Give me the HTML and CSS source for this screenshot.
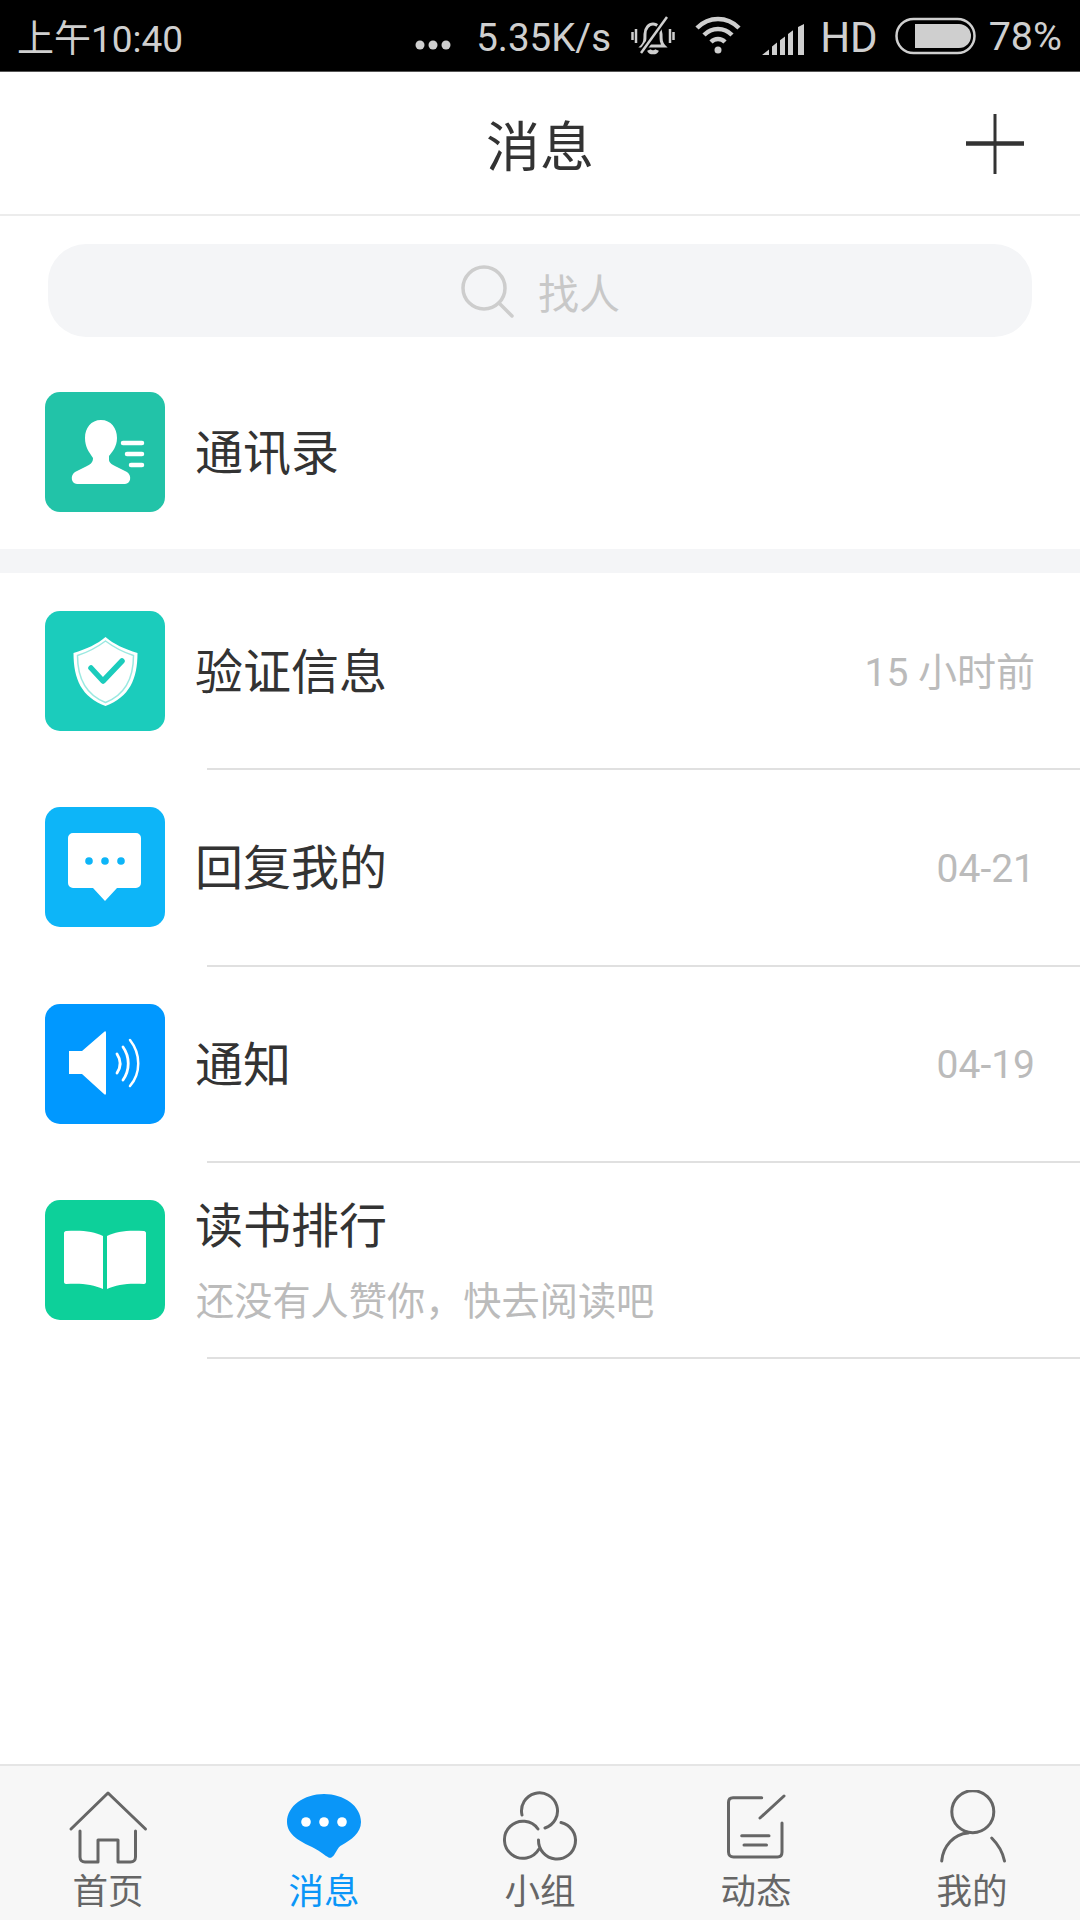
FILE: index.html
```html
<!DOCTYPE html>
<html lang="zh-CN">
<head>
  <meta charset="UTF-8" />
  <meta name="viewport" content="width=device-width, initial-scale=1.0" />
  <title>消息</title>
  <link rel="stylesheet" href="styles.css">
</head>
<body>
  <div class="status-bar">
    <span class="clock">上午10:40</span>
    <div class="status-right">
      <svg class="st-dots" width="36" height="12" viewBox="0 0 36 12"><circle cx="5" cy="6" r="4.5"/><circle cx="18" cy="6" r="4.5"/><circle cx="31" cy="6" r="4.5"/></svg>
      <span class="speed">5.35K/s</span>
      <svg class="st-bell" width="44" height="44" viewBox="0 0 44 44" fill="none" stroke="#cfcfcf" stroke-width="3">
        <path d="M11 32c3-3 3-6 3-12 0-6 4-10 8-10s8 4 8 10c0 6 0 9 3 12z"/>
        <path d="M18 36c1 3 7 3 8 0" stroke-width="4"/>
        <path d="M5 15v14M1.500 18v8M39 15v14M42.500 18v8" stroke-width="2.500"/>
        <path d="M10 39L36 3" stroke="#000" stroke-width="6"/>
        <path d="M10 39L36 3" stroke-width="2.500"/>
      </svg>
      <svg class="st-wifi" width="46" height="42" viewBox="0 0 46 42" fill="none" stroke="#cfcfcf" stroke-width="4.500">
        <path d="M2 15C14 3 32 3 44 15"/>
        <path d="M9 22c8-8 20-8 28 0"/>
        <path d="M16 29c4-4 10-4 14 0"/>
        <circle cx="23" cy="37" r="3.500" fill="#cfcfcf" stroke="none"/>
      </svg>
      <svg class="st-signal" width="45" height="31" viewBox="0 0 45 40" preserveAspectRatio="none" fill="#cfcfcf">
        <path d="M0 40l7-7v7zM10 40V29l5-5v16zM18 40V21l5-5v24zM26 40V13l5-5v32zM36 40V4l6-4v40z"/>
      </svg>
      <span class="hd">HD</span>
      <svg class="st-battery" width="81" height="38" viewBox="0 0 81 38" fill="none">
        <rect x="1.500" y="2" width="78" height="34" rx="17" stroke="#cfcfcf" stroke-width="2.500"/>
        <path d="M20 7h44a12 12 0 0 1 0 24H20z" fill="#cfcfcf"/>
      </svg>
      <span class="pct">78%</span>
    </div>
  </div>

  <div class="top-bar">
    <h1 class="title">消息</h1>
    <svg class="add-btn" width="58" height="60" viewBox="0 0 58 60"><path d="M0 29.500h58" stroke="#333" stroke-width="4.500"/><path d="M29 0v60" stroke="#333" stroke-width="3"/></svg>
  </div>

  <div class="content">
    <div class="search-wrap">
      <div class="search-box">
        <svg width="54" height="54" viewBox="0 0 54 54" fill="none" stroke="#cdcdcd" stroke-width="3.500"><circle cx="24" cy="24" r="21"/><path d="M39 39l13 13" stroke-linecap="round"/></svg>
        <span>找人</span>
      </div>
    </div>

    <div class="row row-contacts">
      <svg class="icon" viewBox="0 0 120 120">
        <rect width="120" height="120" rx="15" fill="#22c3a8"/>
        <path fill="#fff" d="M56 28c10 0 16 8 16 18 0 9-5 14-8 18v4c0 3 4 5 8 7l10 5c5 3 4 12-2 12H32c-6 0-7-9-2-12l12-6c4-2 6-4 6-8-4-6-8-11-8-20 0-10 6-18 16-18z"/>
        <path stroke="#fff" stroke-width="4.500" stroke-linecap="round" d="M78 51h19M82 62h15M86 73h11"/>
      </svg>
      <span class="name">通讯录</span>
    </div>

    <div class="band"></div>

    <div class="row">
      <svg class="icon" viewBox="0 0 120 120">
        <rect width="120" height="120" rx="15" fill="#1bccbc"/>
        <path fill="#fff" d="M60.500 26c8 7 19 12 32 16 0 26-8 44-32 53-24-9-32-27-32-53 13-4 24-9 32-16z"/>
        <path fill="none" stroke="#9be9e1" stroke-width="1.500" d="M60.500 30c8 6 17 11 28 14.500 0 23-8 39-28 47-20-8-28-24-28-47C43.500 41 52.500 36 60.500 30z"/>
        <path fill="none" stroke="#1bccbc" stroke-width="5.500" stroke-linecap="round" stroke-linejoin="round" d="M46 57l12 13 19-20"/>
      </svg>
      <span class="name">验证信息</span>
      <span class="time">15 小时前</span>
    </div>
    <div class="divider"></div>

    <div class="row">
      <svg class="icon" viewBox="0 0 120 120">
        <rect width="120" height="120" rx="15" fill="#0db5f8"/>
        <path fill="#fff" d="M28 26h63a5 5 0 0 1 5 5v45a5 5 0 0 1-5 5H72L60 94 48 81H28a5 5 0 0 1-5-5V31a5 5 0 0 1 5-5z"/>
        <circle cx="44" cy="54" r="3.800" fill="#0db5f8"/><circle cx="60" cy="54" r="3.800" fill="#0db5f8"/><circle cx="76" cy="54" r="3.800" fill="#0db5f8"/>
      </svg>
      <span class="name">回复我的</span>
      <span class="time">04-21</span>
    </div>
    <div class="divider"></div>

    <div class="row">
      <svg class="icon" viewBox="0 0 120 120">
        <rect width="120" height="120" rx="15" fill="#0098ff"/>
        <path fill="#fff" d="M24 47h13l22-19c1-1 2-1 2 1v60c0 2-1 2-2 1L37 70H24z"/>
        <path fill="none" stroke="#fff" stroke-width="2.800" stroke-linecap="round" d="M72 50c4 6 4 13 0 19M78 43c7 10 7 23 0 33"/>
        <path fill="none" stroke="#fff" stroke-width="2.500" stroke-linecap="round" d="M85 36c11 14 11 33 0 46"/>
      </svg>
      <span class="name">通知</span>
      <span class="time">04-19</span>
    </div>
    <div class="divider"></div>

    <div class="row">
      <svg class="icon" viewBox="0 0 120 120">
        <rect width="120" height="120" rx="15" fill="#0dd09a"/>
        <path fill="#fff" d="M21 31c15-1 28 0 37 5v53c-10-5-23-6-37-5-1 0-2-1-2-2V33c0-1 1-2 2-2zM99 31c-15-1-28 0-37 5v53c10-5 23-6 37-5 1 0 2-1 2-2V33c0-1-1-2-2-2z"/>
      </svg>
      <div class="text-col">
        <span class="name">读书排行</span>
        <span class="sub">还没有人赞你，快去阅读吧</span>
      </div>
    </div>
    <div class="divider"></div>
  </div>

  <div class="tab-bar">
    <div class="tab">
      <svg viewBox="0 0 100 80" width="100" height="80" class="tab-icon">
        <path d="M13 39L50 3l37.500 36M22 41v26c0 3 2 5 5 5h13V50h20v22h12.500c3 0 5-2 5-5V41"/>
      </svg>
      <span>首页</span>
    </div>
    <div class="tab active">
      <svg viewBox="0 0 100 80" width="100" height="80">
        <path fill="#0a96f8" d="M50 4c20 0 37 12 37 28 0 11-10 18-19 23-5 2-7 11-10 12-2 2-4 0-6-1-5-4-10-7-14-9-11-5-25-12-25-25C13 16 30 4 50 4z"/>
        <circle cx="32" cy="32" r="4.800" fill="#fff"/><circle cx="50" cy="32" r="4.800" fill="#fff"/><circle cx="68" cy="32" r="4.800" fill="#fff"/>
      </svg>
      <span>消息</span>
    </div>
    <div class="tab">
      <svg viewBox="0 0 100 80" width="100" height="80" class="tab-icon">
        <path d="M32 25A18 18 0 1 1 55 38"/>
        <path d="M48 39A18.500 18.500 0 1 0 49 59"/>
        <path d="M71 32.500A18.500 18.500 0 1 1 48.500 50"/>
      </svg>
      <span>小组</span>
    </div>
    <div class="tab">
      <svg viewBox="0 0 100 80" width="100" height="80" class="tab-icon">
        <path d="M55.700 7.700H27c-3 0-4.500 2-4.500 4.500V62c0 3 2 5 5 5h44c3 0 4.500-2 4.500-5V33"/>
        <path d="M54 28L78 6M35.700 45.700H63M38 55h22.500"/>
      </svg>
      <span>动态</span>
    </div>
    <div class="tab">
      <svg viewBox="0 0 100 80" width="100" height="80" class="tab-icon">
        <circle cx="50.800" cy="21.700" r="21"/>
        <path d="M19.700 71C21 56 32 44 46 43M69.700 48c6 6 11 14 12.800 23"/>
      </svg>
      <span>我的</span>
    </div>
  </div>
</body>
</html>
```

FILE: styles.css
```css
* {
  box-sizing: border-box;
}
html, body {
  margin: 0;
  padding: 0;
}
body {
  width: 1080px;
  height: 1920px;
  display: flex;
  flex-direction: column;
  background: #fff;
  font-family: Roboto, "Noto Sans CJK SC", sans-serif;
  color: #333;
  overflow: hidden;
}

.status-bar {
  height: 72px;
  flex: none;
  display: flex;
  align-items: center;
  justify-content: space-between;
  padding: 0 18px 0 17px;
  background: #000;
  border-bottom: 1px solid #555;
  color: #cfcfcf;
  font-size: 37px;
}
.status-right {
  display: flex;
  align-items: center;
}
.st-dots { fill: #cfcfcf; margin-top: 18px; }
.speed { margin-left: 25px; padding-top: 3px; font-size: 38.5px; }
.st-bell { margin-left: 20px; }
.st-wifi { margin-left: 20px; margin-top: -4px; }
.st-signal { margin-left: 21px; margin-top: 8px; }
.hd { margin-left: 13px; padding-top: 4px; font-size: 42px; }
.st-battery { margin-left: 17px; }
.pct { margin-left: 13px; padding-top: 2px; font-size: 39.5px; }

.top-bar {
  height: 144px;
  flex: none;
  display: flex;
  align-items: center;
  justify-content: center;
  position: relative;
  border-bottom: 2px solid #ececec;
}
.title {
  margin: 0;
  font-size: 54px;
  font-weight: 400;
  color: #333;
}
.add-btn {
  position: absolute;
  right: 56px;
  top: 42px;
}

.content {
  flex: 1;
}
.search-wrap {
  padding: 28px 48px 0;
}
.search-box {
  height: 93px;
  display: flex;
  align-items: center;
  justify-content: center;
  gap: 24px;
  border-radius: 38px;
  background: #f4f5f7;
  color: #c8c8c8;
  font-size: 41px;
}

.row {
  height: 194.3px;
  display: flex;
  align-items: center;
  padding: 0 45px;
}
.row-contacts {
  height: 212px;
  padding-top: 18px;
}
.icon {
  width: 120px;
  height: 120px;
  flex: none;
  margin-right: 30px;
}
.name {
  padding-top: 4px;
  font-size: 48px;
  line-height: 54px;
  color: #333;
}
.time {
  margin-left: auto;
  padding-top: 3px;
  font-size: 39px;
  line-height: 46px;
  color: #bbb;
}
.text-col {
  display: flex;
  flex-direction: column;
  padding-top: 2px;
}
.sub {
  margin-top: 23px;
  padding-left: 1px;
  font-size: 38.2px;
  line-height: 50px;
  color: #bbb;
}
.band {
  height: 24px;
  margin-bottom: 1px;
  background: #f4f5f7;
}
.divider {
  height: 2px;
  margin-left: 207px;
  background: #e0e0e0;
}

.tab-bar {
  height: 156px;
  flex: none;
  display: flex;
  padding-top: 24px;
  background: #f7f7f7;
  border-top: 2px solid #e5e5e5;
}
.tab {
  flex: 1;
  display: flex;
  flex-direction: column;
  align-items: center;
  font-size: 35.5px;
  line-height: 40px;
  color: #666;
}
.tab span {
  margin-top: 2px;
}
.tab.active {
  color: #0a96f8;
}
.tab-icon {
  fill: none;
  stroke: #666;
  stroke-width: 3px;
  stroke-linecap: round;
  stroke-linejoin: round;
}
```
